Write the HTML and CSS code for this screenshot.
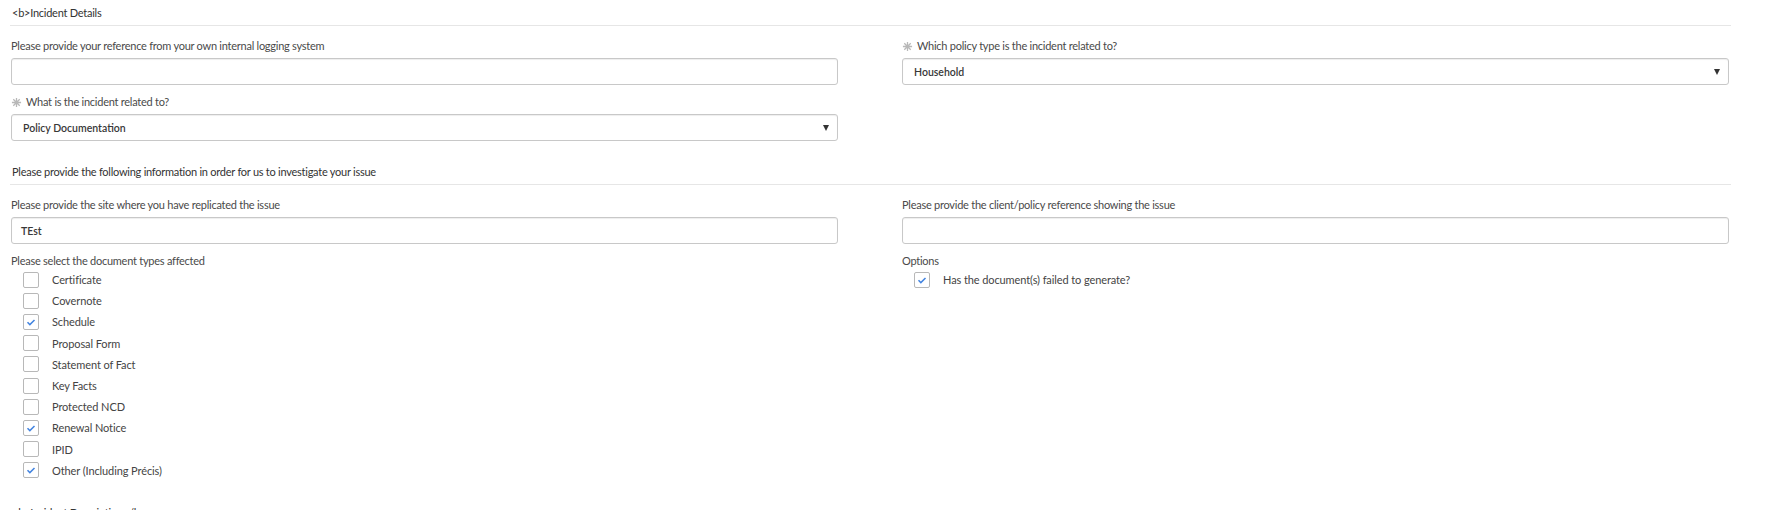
FILE: index.html
```html
<!DOCTYPE html>
<html>
<head>
<meta charset="utf-8">
<link rel="stylesheet" href="styles.css">
</head>
<body>
<div class="page">
  <div class="section">
    <div class="section-head">&lt;b&gt;Incident Details</div>
    <div class="cols">
      <div class="col">
        <div class="group">
          <div class="label">Please provide your reference from your own internal logging system</div>
          <div class="control"></div>
        </div>
        <div class="group">
          <div class="label"><svg class="req" viewBox="0 0 12 12"><path d="M6 1v10M1 6h10M2.5 2.5l7 7M9.5 2.5l-7 7"/></svg>What is the incident related to?</div>
          <div class="control select"><span class="value">Policy Documentation</span><span class="arrow"></span></div>
        </div>
      </div>
      <div class="col">
        <div class="group">
          <div class="label"><svg class="req" viewBox="0 0 12 12"><path d="M6 1v10M1 6h10M2.5 2.5l7 7M9.5 2.5l-7 7"/></svg>Which policy type is the incident related to?</div>
          <div class="control select"><span class="value">Household</span><span class="arrow"></span></div>
        </div>
      </div>
    </div>
  </div>

  <div class="section">
    <div class="section-head">Please provide the following information in order for us to investigate your issue</div>
    <div class="cols">
      <div class="col">
        <div class="group">
          <div class="label">Please provide the site where you have replicated the issue</div>
          <div class="control text"><span class="value">TEst</span></div>
        </div>
        <div class="group list">
          <div class="label">Please select the document types affected</div>
          <div class="checks">
            <div class="check"><span class="box"></span>Certificate</div>
            <div class="check"><span class="box"></span>Covernote</div>
            <div class="check"><span class="box on"><svg viewBox="0 0 16 16"><path d="M4 8.3l2.7 2.7L12 5.6"/></svg></span>Schedule</div>
            <div class="check"><span class="box"></span>Proposal Form</div>
            <div class="check"><span class="box"></span>Statement of Fact</div>
            <div class="check"><span class="box"></span>Key Facts</div>
            <div class="check"><span class="box"></span>Protected NCD</div>
            <div class="check"><span class="box on"><svg viewBox="0 0 16 16"><path d="M4 8.3l2.7 2.7L12 5.6"/></svg></span>Renewal Notice</div>
            <div class="check"><span class="box"></span>IPID</div>
            <div class="check"><span class="box on"><svg viewBox="0 0 16 16"><path d="M4 8.3l2.7 2.7L12 5.6"/></svg></span>Other (Including Précis)</div>
          </div>
        </div>
      </div>
      <div class="col">
        <div class="group">
          <div class="label">Please provide the client/policy reference showing the issue</div>
          <div class="control"></div>
        </div>
        <div class="group list">
          <div class="label">Options</div>
          <div class="checks">
            <div class="check"><span class="box on"><svg viewBox="0 0 16 16"><path d="M4 8.3l2.7 2.7L12 5.6"/></svg></span>Has the document(s) failed to generate?</div>
          </div>
        </div>
      </div>
    </div>
  </div>

  <div class="section">
    <div class="section-head">&lt;b&gt;Incident Description&lt;/b&gt;</div>
  </div>
</div>
</body>
</html>
```

FILE: styles.css
```css
html, body {
  margin: 0;
  padding: 0;
  background: #fff;
}
body {
  font-family: Lato, "Open Sans", sans-serif;
  font-size: 11px;
  letter-spacing: -0.25px;
  color: #444;
}
.page {
  width: 1721px;
  margin-left: 10px;
  padding-top: 5px;
}
.section {
  margin-bottom: 14px;
}
.section-head {
  line-height: 16px;
  padding: 0 0 4px 2px;
  border-bottom: 1px solid #e6e6e6;
  color: #333;
}
.cols {
  display: grid;
  grid-template-columns: 1fr 1fr;
  column-gap: 64px;
  padding: 12px 2px 0 1px;
}
.group {
  margin-bottom: 9px;
}
.group.list {
  margin-bottom: 10px;
}
.label {
  display: flex;
  align-items: center;
  line-height: 16px;
  margin-bottom: 4px;
  color: #4a4a4a;
}
.req {
  width: 11px;
  height: 11px;
  margin-right: 4px;
  fill: none;
  stroke: #b8b8b8;
  stroke-width: 1.4;
}
.control {
  box-sizing: border-box;
  height: 27px;
  border: 1px solid #c8c8c8;
  border-radius: 3px;
  box-shadow: inset 0 1px 1px rgba(0,0,0,0.07);
  display: flex;
  align-items: center;
  background: #fff;
}
.value {
  color: #383838;
  font-weight: 600;
  font-size: 10.5px;
  letter-spacing: 0;
}
.select .value {
  padding-left: 11px;
  flex: 1;
}
.text .value {
  padding-left: 9px;
}
.arrow {
  width: 0;
  height: 0;
  border-left: 3px solid transparent;
  border-right: 3px solid transparent;
  border-top: 6px solid #333;
  margin-right: 8px;
}
.checks {
  padding-left: 12px;
  margin-top: -4px;
}
.check {
  display: flex;
  align-items: center;
  height: 21.2px;
  color: #444;
  letter-spacing: -0.1px;
}
.box {
  box-sizing: border-box;
  width: 16px;
  height: 16px;
  border: 1px solid #b8b8b8;
  border-radius: 2px;
  margin-right: 13px;
  flex: none;
  display: flex;
}
.box svg {
  width: 14px;
  height: 14px;
  fill: none;
  stroke: #4384e0;
  stroke-width: 1.7;
}
```
